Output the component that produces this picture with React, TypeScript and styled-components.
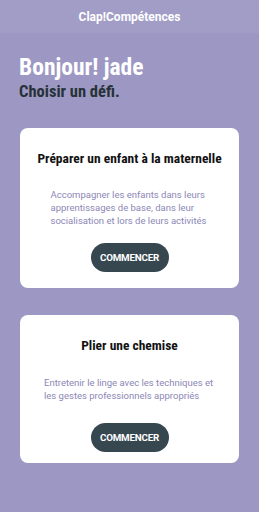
import styled, { createGlobalStyle } from 'styled-components';

const GlobalStyle = createGlobalStyle`
  html, body {
    margin: 0;
    padding: 0;
    background: #9d98c3;
  }
  body {
    font-family: Roboto, "Liberation Sans", sans-serif;
  }
`;

const Page = styled.div`
  width: 259px;
  min-height: 512px;
  background: #9d98c3;
  display: flex;
  flex-direction: column;
`;

const TopBar = styled.header`
  height: 33px;
  background: #a29dc7;
  display: flex;
  align-items: center;
  justify-content: center;
  color: #ffffff;
  font-size: 12px;
  font-weight: 700;
  font-family: Roboto, sans-serif;
`;

const Greeting = styled.div`
  padding: 20px 19px 0;
`;

const Hello = styled.h1`
  margin: 0;
  font-family: "Roboto Condensed", "Liberation Sans Narrow", Roboto, sans-serif;
  font-weight: 700;
  font-size: 23.5px;
  line-height: 28px;
  color: #ffffff;
`;

const Subtitle = styled.h2`
  margin: 0;
  font-family: "Roboto Condensed", "Liberation Sans Narrow", Roboto, sans-serif;
  font-weight: 700;
  font-size: 16.5px;
  line-height: 21px;
  color: #263238;
`;

const List = styled.div`
  display: flex;
  flex-direction: column;
  gap: 27px;
  padding: 26px 20px 0;
`;

const Card = styled.div<{ $height: number }>`
  background: #ffffff;
  border-radius: 8px;
  height: ${(p) => p.$height}px;
  box-sizing: border-box;
  padding-top: 21px;
  display: flex;
  flex-direction: column;
  align-items: center;
`;

const CardTitle = styled.h3`
  margin: 0;
  font-family: "Roboto Condensed", "Liberation Sans Narrow", Roboto, sans-serif;
  font-weight: 700;
  font-size: 13.5px;
  line-height: 18px;
  color: #111111;
  text-align: center;
`;

const CardText = styled.p<{ $top: number; $width: number }>`
  margin: ${(p) => p.$top}px 0 0;
  width: ${(p) => p.$width}px;
  font-family: Roboto, sans-serif;
  font-size: 9.5px;
  line-height: 13px;
  color: #8c87b6;
  text-align: left;
`;

const StartButton = styled.button<{ $top: number }>`
  margin-top: ${(p) => p.$top}px;
  width: 78px;
  height: 29px;
  border: none;
  border-radius: 15px;
  background: #37474f;
  color: #ffffff;
  font-family: Roboto, sans-serif;
  font-weight: 700;
  font-size: 9.8px;
  letter-spacing: -0.2px;
  padding: 0;
  cursor: pointer;
`;

const challenges = [
  {
    title: 'Préparer un enfant à la maternelle',
    text: 'Accompagner les enfants dans leurs apprentissages de base, dans leur socialisation et lors de leurs activités',
    height: 160,
    textTop: 21,
    buttonTop: 16,
    width: 158,
  },
  {
    title: 'Plier une chemise',
    text: 'Entretenir le linge avec les techniques et les gestes professionnels appropriés',
    height: 148,
    textTop: 21.5,
    buttonTop: 21.5,
    width: 171,
  },
];

export default function App() {
  return (
    <>
      <GlobalStyle />
      <Page>
        <TopBar>Clap!Compétences</TopBar>
        <Greeting>
          <Hello>Bonjour! jade</Hello>
          <Subtitle>Choisir un défi.</Subtitle>
        </Greeting>
        <List>
          {challenges.map((c) => (
            <Card key={c.title} $height={c.height}>
              <CardTitle>{c.title}</CardTitle>
              <CardText $top={c.textTop} $width={c.width}>
                {c.text}
              </CardText>
              <StartButton $top={c.buttonTop}>COMMENCER</StartButton>
            </Card>
          ))}
        </List>
      </Page>
    </>
  );
}
